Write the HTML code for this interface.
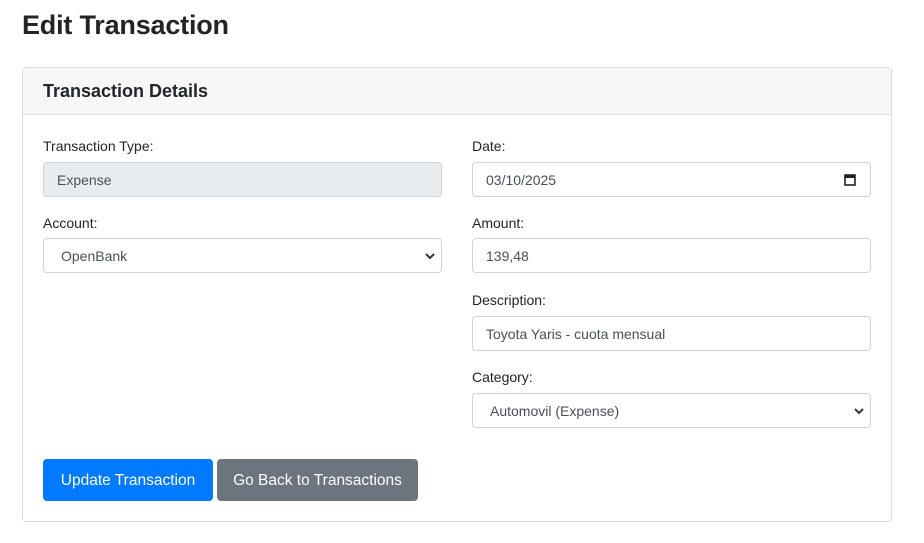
<!DOCTYPE html>
<html><head><style>
*{box-sizing:border-box;margin:0;padding:0}
body{width:924px;height:543px;background:#fff;font-family:"Liberation Sans",sans-serif;color:#212529;position:relative;overflow:hidden}
.a{position:absolute}
h1{position:absolute;left:22px;top:10px;font-size:27px;font-weight:bold;color:#212529;letter-spacing:-0.2px}
.card{left:22px;top:67px;width:870px;height:455px;border:1px solid #dcdcdc;border-radius:4px}
.hdr{left:23px;top:68px;width:868px;height:47px;background:#f7f7f7;border-bottom:1px solid #dcdcdc}
.hdr span{position:absolute;left:20px;top:13px;font-size:18px;font-weight:bold}
.lbl{font-size:14px;color:#212529}
.in{height:35px;width:399px;border:1px solid #ced4da;border-radius:4px;font-size:14px;color:#495057;padding-left:13px;line-height:35px;background:#fff}
.chev{position:absolute;right:6px;top:13px}
.btn{height:42px;border-radius:4px;color:#fff;font-size:15.5px;line-height:43px;text-align:center}
</style></head><body>
<h1>Edit Transaction</h1>
<div class="a card"></div>
<div class="a hdr"><span>Transaction Details</span></div>

<div class="a lbl" style="left:43px;top:138px">Transaction Type:</div>
<div class="a in" style="left:43px;top:162px;background:#e9ecef">Expense</div>
<div class="a lbl" style="left:43px;top:215px">Account:</div>
<div class="a in" style="left:43px;top:238px;padding-left:17px">OpenBank<svg class="chev" width="10" height="8" viewBox="0 0 10 8"><path d="M1 2l4 4 4-4" stroke="#333" stroke-width="2" fill="none"/></svg></div>

<div class="a lbl" style="left:472px;top:138px">Date:</div>
<div class="a in" style="left:472px;top:162px">03/10/2025<svg class="a" style="right:14px;top:10px" width="12" height="13" viewBox="0 0 12 13"><rect x="1" y="2" width="10" height="10" fill="none" stroke="#222" stroke-width="1.6"/><rect x="1" y="2" width="10" height="3" fill="#222"/></svg></div>
<div class="a lbl" style="left:472px;top:215px">Amount:</div>
<div class="a in" style="left:472px;top:238px">139,48</div>
<div class="a lbl" style="left:472px;top:292px">Description:</div>
<div class="a in" style="left:472px;top:316px">Toyota Yaris - cuota mensual</div>
<div class="a lbl" style="left:472px;top:369px">Category:</div>
<div class="a in" style="left:472px;top:393px;padding-left:17px">Automovil (Expense)<svg class="chev" width="10" height="8" viewBox="0 0 10 8"><path d="M1 2l4 4 4-4" stroke="#333" stroke-width="2" fill="none"/></svg></div>

<div class="a btn" style="left:43px;top:459px;width:170px;background:#007bff">Update Transaction</div>
<div class="a btn" style="left:217px;top:459px;width:201px;background:#6c757d">Go Back to Transactions</div>
</body></html>
